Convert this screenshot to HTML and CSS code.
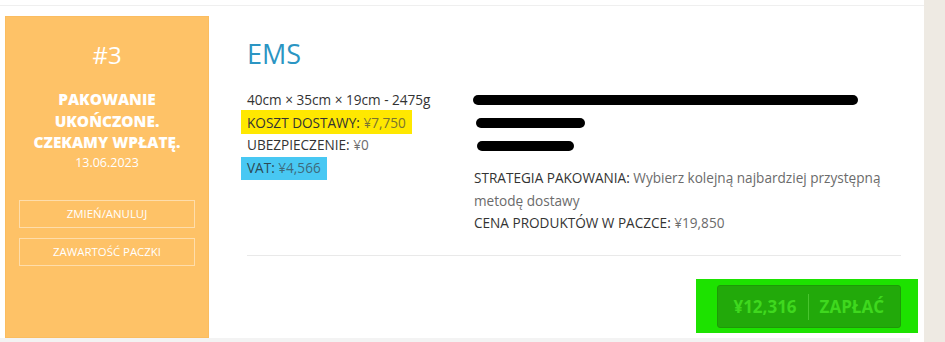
FILE: index.html
```html
<!DOCTYPE html>
<html lang="pl">
    <head>
        <meta charset="UTF-8">
        <meta name="viewport" content="width=device-width, initial-scale=1.0">
        <link rel="stylesheet" href="styles.css">
        <title>Paczki</title>
    </head>
    <body>
        <div class="page">
            <div class="topline"></div>

            <div class="order">
                <aside class="status">
                    <div class="num">#3</div>
                    <div class="state">PAKOWANIE<br>UKOŃCZONE.<br>CZEKAMY WPŁATĘ.</div>
                    <div class="date">13.06.2023</div>
                    <a class="side-btn" href="#">ZMIEŃ/ANULUJ</a>
                    <a class="side-btn" href="#">ZAWARTOŚĆ PACZKI</a>
                </aside>

                <div class="details">
                    <h2 class="carrier">EMS</h2>

                    <div class="info">
                        <div class="col-left">
                            <div class="line">40cm × 35cm × 19cm - 2475g</div>
                            <div class="line"><span class="mark yellow"><span class="label">KOSZT DOSTAWY:</span> <span class="value">¥7,750</span></span></div>
                            <div class="line"><span class="label">UBEZPIECZENIE:</span> <span class="value">¥0</span></div>
                            <div class="line"><span class="mark blue"><span class="label">VAT:</span> <span class="value">¥4,566</span></span></div>
                        </div>

                        <div class="col-right">
                            <div class="address">
                                <div class="line"><span class="redact r1"></span></div>
                                <div class="line"><span class="redact r2"></span></div>
                                <div class="line"><span class="redact r3"></span></div>
                            </div>
                            <p class="line value"><span class="label">STRATEGIA PAKOWANIA:</span> Wybierz kolejną najbardziej przystępną metodę dostawy</p>
                            <p class="line value"><span class="label">CENA PRODUKTÓW W PACZCE:</span> ¥19,850</p>
                        </div>
                    </div>

                    <div class="divider"></div>

                    <div class="pay-row">
                        <div class="pay-mark">
                            <button class="pay-button">
                                <span>¥12,316</span>
                                <span class="pay-sep"></span>
                                <span>ZAPŁAĆ</span>
                            </button>
                        </div>
                    </div>
                </div>
            </div>

            <div class="next"></div>
        </div>
    </body>
</html>
```

FILE: styles.css
```css
body,
html {
    margin: 0;
    height: 100%;
    background: #eeeae3;
    font-family: "Open Sans", "Noto Sans", Arial, sans-serif;
    overflow: hidden;
}

.page {
    width: 924px;
    background: #fff;
    padding-top: 5px;
}

.topline {
    border-top: 1px solid #efefef;
    height: 10px;
}

.order {
    display: flex;
    align-items: stretch;
    padding-left: 5px;
    width: 896px;
}

/* left status column */
.status {
    width: 176px;
    background-color: #fec267;
    border: 1px solid #fbbd60;
    padding: 24px 13px 0 13px;
    color: #fff;
    text-align: center;
    display: flex;
    flex-direction: column;
}

.num {
    font-size: 24px;
    line-height: 28px;
}

.state {
    margin-top: 20px;
    font-size: 15.4px;
    line-height: 21.5px;
    font-weight: 800;
}

.date {
    font-size: 12.5px;
    line-height: 18px;
}

.side-btn {
    display: block;
    height: 26px;
    line-height: 26px;
    border: 1px solid rgba(255, 255, 255, 0.45);
    color: #fff;
    text-decoration: none;
    font-size: 11.4px;
    margin-top: 10px;
}

.date + .side-btn {
    margin-top: 28px;
}

/* right details */
.details {
    flex: 1;
    margin-left: 38px;
    padding: 23px 0 5px 0;
    color: #6b6b6b;
    font-size: 13.6px;
}

.carrier {
    margin: 0;
    font-size: 27px;
    line-height: 30px;
    font-weight: normal;
    color: #2b95c3;
}

.info {
    display: flex;
    margin-top: 20px;
}

.col-left {
    width: 227px;
}

.col-right {
    flex: 1;
}

.line {
    margin: 0;
    line-height: 22.7px;
}

.col-left .line:first-child {
    color: #333;
}

.label {
    color: #333;
}

.value {
    color: #6b6b6b;
}

.mark {
    display: inline-block;
    padding: 0 6px;
    margin-left: -6px;
}

.mark.yellow {
    background-color: #ffe800;
    padding-top: 2px;
    margin-top: -2px;
}

.mark.yellow .value {
    color: #7a7430;
}

.mark.blue {
    background-color: #48c8f3;
    padding-right: 6px;
}

.mark.blue .value {
    color: #3e6a7c;
}

.mark.blue .label {
    color: #2d4a55;
}

.address {
    margin-bottom: 10px;
}

.address .line {
    display: flex;
    align-items: center;
    height: 22.7px;
}

.redact {
    display: block;
    height: 10px;
    background: #000;
    border-radius: 5px;
}

.r1 {
    width: 385px;
    margin-left: -1px;
}

.r2 {
    width: 109px;
    margin-left: 2px;
}

.r3 {
    width: 97px;
    margin-left: 3px;
}

.divider {
    border-top: 1px solid #e9e9e9;
    margin-top: 20px;
}

.pay-row {
    display: flex;
    justify-content: flex-end;
    margin-top: 23px;
}

.pay-mark {
    background-color: #1de200;
    padding: 6px 17px 5px 21px;
    margin-right: -17px;
}

.pay-button {
    display: flex;
    align-items: center;
    gap: 11px;
    height: 43px;
    padding: 0 16px 0 15px;
    border: 1px solid #1d9a07;
    border-radius: 3px;
    background-color: #22a90a;
    color: #3fd81e;
    font-family: "Open Sans", Arial, sans-serif;
    font-size: 17px;
    font-weight: 700;
    cursor: pointer;
}

.pay-sep {
    width: 1px;
    height: 26px;
    background-color: rgba(120, 230, 90, 0.45);
}

.next {
    width: 910px;
    height: 10px;
    background: #f3f3f3;
}
```
